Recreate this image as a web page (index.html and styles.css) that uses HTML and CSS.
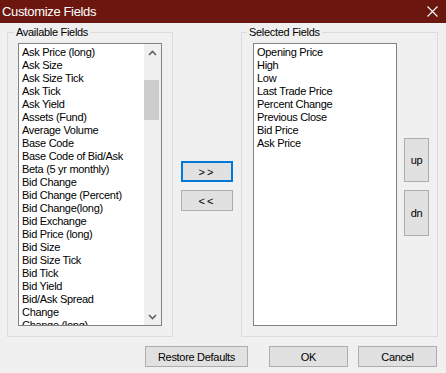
FILE: index.html
```html
<!DOCTYPE html>
<html lang="en">
<head>
    <meta charset="UTF-8">
    <meta name="viewport" content="width=device-width, initial-scale=1.0">
    <title>Customize Fields</title>
    <link rel="stylesheet" href="styles.css">
</head>
<body>

    <div class="dialog">
        <div class="titlebar">
            <span class="title">Customize Fields</span>
            <svg class="close" width="11" height="11" viewBox="0 0 11 11">
                <path d="M0.5 0.5 L10.5 10.5 M10.5 0.5 L0.5 10.5" stroke="#fff" stroke-width="1.1" fill="none"/>
            </svg>
        </div>

        <div class="main">
            <fieldset class="group available">
                <legend>Available Fields</legend>
                <div class="listbox">
                    <ul class="items">
                        <li>Ask Price (long)</li>
                        <li>Ask Size</li>
                        <li>Ask Size Tick</li>
                        <li>Ask Tick</li>
                        <li>Ask Yield</li>
                        <li>Assets (Fund)</li>
                        <li>Average Volume</li>
                        <li>Base Code</li>
                        <li>Base Code of Bid/Ask</li>
                        <li>Beta (5 yr monthly)</li>
                        <li>Bid Change</li>
                        <li>Bid Change (Percent)</li>
                        <li>Bid Change(long)</li>
                        <li>Bid Exchange</li>
                        <li>Bid Price (long)</li>
                        <li>Bid Size</li>
                        <li>Bid Size Tick</li>
                        <li>Bid Tick</li>
                        <li>Bid Yield</li>
                        <li>Bid/Ask Spread</li>
                        <li>Change</li>
                        <li>Change (long)</li>
                    </ul>
                    <div class="scrollbar">
                        <div class="arrow">
                            <svg width="9" height="6" viewBox="0 0 9 6"><path d="M1 5 L4.5 1.5 L8 5" stroke="#606060" stroke-width="1.6" fill="none"/></svg>
                        </div>
                        <div class="track"><div class="thumb"></div></div>
                        <div class="arrow">
                            <svg width="9" height="6" viewBox="0 0 9 6"><path d="M1 1 L4.5 4.5 L8 1" stroke="#606060" stroke-width="1.6" fill="none"/></svg>
                        </div>
                    </div>
                </div>
            </fieldset>

            <div class="mover">
                <button class="btn small focused">&gt;&gt;</button>
                <button class="btn small">&lt;&lt;</button>
            </div>

            <fieldset class="group selected">
                <legend>Selected Fields</legend>
                <div class="selected-row">
                    <div class="listbox">
                        <ul class="items">
                            <li>Opening Price</li>
                            <li>High</li>
                            <li>Low</li>
                            <li>Last Trade Price</li>
                            <li>Percent Change</li>
                            <li>Previous Close</li>
                            <li>Bid Price</li>
                            <li>Ask Price</li>
                        </ul>
                    </div>
                    <div class="order">
                        <button class="btn up">up</button>
                        <button class="btn dn">dn</button>
                    </div>
                </div>
            </fieldset>
        </div>

        <div class="footer">
            <button class="btn restore">Restore Defaults</button>
            <button class="btn ok">OK</button>
            <button class="btn cancel">Cancel</button>
        </div>
    </div>

</body>
</html>
```

FILE: styles.css
```css
* {
    margin: 0px;
    padding: 0px;
    box-sizing: border-box;
}

body {
    font-family: 'Liberation Sans', Arial, sans-serif;
    font-size: 11px;
    letter-spacing: -0.3px;
    color: #000;
    background: #f0f0f0;
    width: 446px;
    height: 373px;
    overflow: hidden;
}

.titlebar {
    height: 23px;
    background: #6b170f;
    color: #fff;
    display: flex;
    align-items: center;
    justify-content: space-between;
    padding: 0 8px 0 2px;
}

.title {
    font-size: 13px;
    letter-spacing: -0.35px;
    line-height: 22px;
}

.main {
    display: flex;
    padding: 2px 8px 0 7px;
}

.group {
    border: 1px solid #dcdcdc;
    padding: 4px 10px 10px 10px;
}

.group legend {
    line-height: 14px;
    padding: 0 2px;
    margin-left: -4px;
}

.available {
    width: 166px;
}

.selected {
    width: 197px;
    padding-left: 11px;
    padding-right: 8px;
}

.selected legend {
    margin-left: -6px;
}

.listbox {
    width: 144px;
    height: 283px;
    background: #fff;
    border: 1px solid #828282;
    display: flex;
    overflow: hidden;
}

.items {
    list-style: none;
    flex: 1;
    padding: 2px 0 0 3px;
    white-space: nowrap;
    overflow: hidden;
}

.items li {
    height: 13px;
    line-height: 13px;
}

.scrollbar {
    width: 17px;
    background: #f0f0f0;
    display: flex;
    flex-direction: column;
}

.arrow {
    height: 17px;
    display: flex;
    align-items: center;
    justify-content: center;
}

.track {
    flex: 1;
    padding-top: 19px;
}

.thumb {
    width: 15px;
    height: 40px;
    background: #cdcdcd;
}

.btn {
    font-family: inherit;
    font-size: 11px;
    letter-spacing: -0.3px;
    color: #000;
    background: #e1e1e1;
    border: 1px solid #adadad;
}

.mover {
    width: 68px;
    display: flex;
    flex-direction: column;
    gap: 8px;
    padding: 136px 0 0 8px;
}

.mover .small {
    width: 52px;
    height: 21px;
    letter-spacing: 2px;
}

.mover .focused {
    border: 2px solid #0078d7;
}

.selected-row {
    display: flex;
    gap: 7px;
}

.order {
    display: flex;
    flex-direction: column;
    gap: 8px;
    padding-top: 95px;
}

.order .btn {
    width: 25px;
}

.order .up {
    height: 44px;
}

.order .dn {
    height: 46px;
}

.footer {
    display: flex;
    justify-content: flex-end;
    padding: 9px 9px 0 0;
}

.footer .btn {
    height: 21px;
}

.restore {
    width: 103px;
    margin-right: 21px;
}

.ok {
    width: 79px;
    margin-right: 10px;
}

.cancel {
    width: 79px;
}
```
